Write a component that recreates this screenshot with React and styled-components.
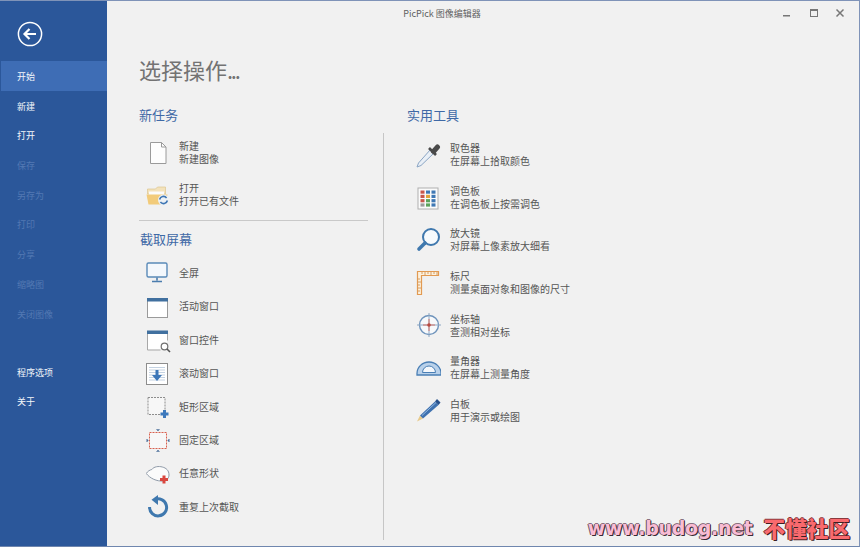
import React from 'react';
import styled, { createGlobalStyle } from 'styled-components';

const GlobalStyle = createGlobalStyle`
  html, body {
    margin: 0;
    padding: 0;
    background: #f1f1f1;
  }
  body {
    font-family: "Noto Sans CJK SC", "Liberation Sans", sans-serif;
    overflow: hidden;
  }
`;

const Window = styled.div`
  position: relative;
  display: flex;
  width: 860px;
  height: 547px;
  box-sizing: border-box;
  overflow: hidden;
  background: #f1f1f1;
  border-top: 1px solid #7f93b8;
  border-right: 1px solid #7f93b8;
  border-bottom: 1px solid #6f86ae;
`;

const Sidebar = styled.nav`
  width: 107px;
  flex-shrink: 0;
  background: #2b579a;
  display: flex;
  flex-direction: column;
`;

const BackButton = styled.div`
  height: 60px;
  padding-left: 17px;
  display: flex;
  align-items: center;
  padding-top: 6px;
  box-sizing: border-box;
`;

const NavList = styled.div`
  display: flex;
  flex-direction: column;
  margin-bottom: ${(props) => props.$gap || 0}px;
`;

const NavItem = styled.div`
  height: 29.7px;
  line-height: 31px;
  padding-left: 17px;
  font-size: 9px;
  color: ${(props) => (props.$disabled ? '#5379b3' : '#f4f7fb')};
  background: ${(props) => (props.$active ? '#3e6db5' : 'transparent')};
  margin-left: ${(props) => (props.$active ? '1px' : '0')};
  text-indent: ${(props) => (props.$active ? '-1px' : '0')};
`;

const Main = styled.main`
  flex: 1;
  display: flex;
  flex-direction: column;
  min-width: 0;
`;

const TitleBar = styled.header`
  height: 26px;
  box-sizing: border-box;
  padding: 0 82px 2px 0;
  display: flex;
  align-items: center;
  justify-content: center;
  position: relative;
  font-size: 9px;
  color: #5f5f5f;
`;

const WinButtons = styled.div`
  position: absolute;
  right: 14px;
  top: 6px;
  display: flex;
  gap: 16.5px;
`;

const Content = styled.div`
  flex: 1;
  display: flex;
  flex-direction: column;
  padding-left: 32px;
`;

const Heading = styled.h1`
  margin: 23.5px 0 18.5px;
  font-size: 22px;
  line-height: 36px;
  height: 36px;
  font-weight: 400;
  color: #737373;
`;

const Dots = styled.span`
  letter-spacing: -2.3px;
`;

const Columns = styled.div`
  display: flex;
  align-items: stretch;
`;

const LeftColumn = styled.section`
  width: 229px;
  flex-shrink: 0;
`;

const RightColumn = styled.section`
  border-left: 1px solid #c6c6c6;
  margin-left: 15px;
  height: 407px;
  margin-top: 28px;
  padding-left: 23px;
`;

const RightHeadingOffset = styled.div`
  margin-top: -28px;
`;

const SectionTitle = styled.h2`
  margin: ${(props) => props.$top || 0}px 0 ${(props) => props.$bottom || 0}px;
  font-size: 13px;
  line-height: 20px;
  font-weight: 400;
  color: #3f69a6;
  padding-left: ${(props) => props.$indent || 0}px;
`;

const Divider = styled.hr`
  border: 0;
  border-top: 1px solid #c9c9c9;
  margin: 5.5px 0 0;
`;

const TaskRow = styled.div`
  display: flex;
  align-items: center;
  height: ${(props) => props.$height}px;
  padding-left: ${(props) => props.$indent}px;
`;

const IconSlot = styled.div`
  width: ${(props) => props.$width}px;
  flex-shrink: 0;
  display: flex;
  align-items: center;
`;

const RowText = styled.div`
  display: flex;
  flex-direction: column;
  font-size: 10px;
  line-height: 13px;
  color: #555;
`;

const Watermark = styled.div`
  position: absolute;
  right: 9px;
  bottom: 7px;
  display: flex;
  align-items: center;
  gap: 11px;
  font-family: "DejaVu Sans", sans-serif;
  font-weight: 700;
  white-space: nowrap;
`;

const MarkLatin = styled.span`
  font-size: 19px;
  line-height: 22px;
  letter-spacing: -0.3px;
  color: #f9bcd4;
  text-shadow: 1px 1px 0 #3a2a34, -1px 0 0 #6f5663, 0 -1px 0 #8a7280, 1px 0 0 #6f5663;
`;

const MarkCjk = styled.span`
  font-family: "Noto Sans CJK SC", sans-serif;
  font-weight: 900;
  font-size: 21.6px;
  line-height: 22px;
  color: #f96a6e;
  text-shadow: 1px 1px 0 #3f1f22, -1px 0 0 #7a3034, 0 -1px 0 #8a3a3e, 1px 0 0 #7a3034;
`;

const BackIcon = () => (
  <svg width="26" height="26" viewBox="0 0 26 26" fill="none">
    <circle cx="13" cy="13" r="11.6" stroke="#fff" strokeWidth="1.5" />
    <path d="M7 13h12M12.5 8l-5 5 5 5" stroke="#fff" strokeWidth="2.2" />
  </svg>
);

const MinIcon = () => (
  <svg width="10" height="12" viewBox="0 0 10 12">
    <rect x="1" y="8" width="7" height="1.5" fill="#777" />
  </svg>
);

const MaxIcon = () => (
  <svg width="10" height="12" viewBox="0 0 10 12" fill="none">
    <rect x="1.5" y="2.5" width="7" height="7" stroke="#777" />
    <rect x="1" y="2" width="8" height="2" fill="#777" />
  </svg>
);

const CloseIcon = () => (
  <svg width="10" height="12" viewBox="0 0 10 12" fill="none">
    <path d="M1.5 2.5l7 7M8.5 2.5l-7 7" stroke="#777" strokeWidth="1.5" />
  </svg>
);

// dx, dy nudge the drawing inside its 28px box
const Svg = ({ dx = 0, dy = 0, children }) => (
  <svg width="28" height="28" viewBox={`${-dx} ${-dy} 28 28`} fill="none">
    {children}
  </svg>
);

const NewIcon = () => (
  <Svg>
    <path d="M4.5 4.5h11l4.500 4.500v16.500H4.500z" fill="#fdfdfd" stroke="#9a9a9a" />
    <path d="M15.500 4.500v4.500h4.500" stroke="#9a9a9a" />
  </Svg>
);

const OpenIcon = () => (
  <Svg dy={2}>
    <path d="M1.500 7h8l2-2h8v7h-18z" fill="#f3e2bb" stroke="#dcc68f" strokeWidth="0.7" />
    <path d="M3 9.500h15v5H3z" fill="#fbfbfb" />
    <path d="M0.500 12.500h21l-2 10H2.500z" fill="#f2cb7a" />
    <circle cx="17.500" cy="18" r="5.500" fill="#edf1f5" />
    <path d="M13.600 17.500a4 4 0 0 1 7-1.600M21.400 18.500a4 4 0 0 1-7 1.600" stroke="#3f76b3" strokeWidth="1.600" />
  </Svg>
);

const ScreenIcon = () => (
  <Svg dx={-1} dy={1.5}>
    <rect x="2" y="3.500" width="20" height="14" rx="1.500" fill="#f4f8fc" stroke="#5a8ab8" strokeWidth="1.400" />
    <path d="M12 18v3M7 22h10" stroke="#4b7dae" strokeWidth="1.600" />
  </Svg>
);

const ActiveWindowIcon = () => (
  <Svg dx={-1} dy={3}>
    <rect x="2.500" y="3.500" width="20" height="19" fill="#fff" stroke="#9a9a9a" />
    <rect x="2" y="3" width="21" height="3.500" fill="#41709f" />
  </Svg>
);

const ControlIcon = () => (
  <Svg dx={-1} dy={2.500}>
    <path d="M3 5h19v17H3z" fill="#fff" />
    <path d="M2.500 4v18.500h13M22.500 4v9" stroke="#a8a8a8" />
    <rect x="2" y="3" width="21" height="3.500" fill="#41709f" />
    <circle cx="19.500" cy="19" r="3.300" fill="#fff" stroke="#707070" strokeWidth="1.200" />
    <path d="M22 21.500l3 3" stroke="#555" strokeWidth="1.600" />
  </Svg>
);

const ScrollIcon = () => (
  <Svg dx={-2} dy={1}>
    <rect x="2.500" y="3.500" width="21" height="21" fill="#fff" stroke="#8d8d8d" />
    <path d="M5 7.500h16M5 10h16M5 12.500h16M5 15h16M5 17.500h16M5 20h16" stroke="#c4d2e2" />
    <path d="M11.500 10h3v5h3.500l-5 6-5-6h3.500z" fill="#3c76b8" />
  </Svg>
);

const RectIcon = () => (
  <Svg dx={-1.500} dy={2}>
    <rect x="3.500" y="3.500" width="17" height="17" fill="#f7f7f7" stroke="#8d8d8d" strokeDasharray="2 1" />
    <path d="M20 16v8M16 20h8" stroke="#3c78bc" strokeWidth="3" />
  </Svg>
);

const FixedIcon = () => (
  <Svg>
    <path d="M3.500 7.500h17v16h-17z" fill="#f7f7f7" stroke="#d9604f" strokeDasharray="2 1" />
    <path d="M10.500 4.500h3l-1.500 1.500zM10.500 26.500h3l-1.500-1.500zM0.800 14v3l1.500-1.500zM23.200 14v3l-1.500-1.500z" fill="#4a6f9a" stroke="#4a6f9a" strokeWidth="0.500" />
  </Svg>
);

const FreeIcon = () => (
  <Svg dx={-0.500} dy={1.500}>
    <path d="M0.800 13c1.500-2.500 3.500-3.500 5.500-4 2-3 7-3.500 10.500-2.500 4 1 6.700 3.500 6.700 8 0 3-2 5.500-6 6-6 .5-13-2.500-16.700-7.500z" fill="#fbfbfb" stroke="#8f9aa8" />
    <path d="M18.500 15v8M14.500 19h8" stroke="#d9473f" strokeWidth="3" />
  </Svg>
);

const RepeatIcon = () => (
  <Svg>
    <path d="M8.500 7.700A8.500 8.500 0 1 1 3.600 15" stroke="#3f78ae" strokeWidth="3" />
    <path d="M12 3v10L5.500 7.800z" fill="#3f78ae" />
  </Svg>
);

const PickerIcon = () => (
  <Svg>
    <path d="M17.500 9.500L5.500 23l-1.500 4 4-1.500L21 13z" fill="#e9eff6" stroke="#8aa5c4" />
    <path d="M16 8l7 7" stroke="#4a4a4a" strokeWidth="2.600" />
    <path d="M20.500 11.500l4-4.500" stroke="#4a4a4a" strokeWidth="5" strokeLinecap="round" />
  </Svg>
);

const PALETTE = [
  '#c9574a', '#3f78b4', '#3f78b4',
  '#c9574a', '#e0a53b', '#3f78b4',
  '#c9574a', '#5ca35a', '#3f78b4',
  '#9c9c9c', '#5ca35a', '#3f78b4',
];

const PaletteIcon = () => (
  <Svg dx={1.500} dy={1.500}>
    <rect x="3.500" y="3.500" width="20" height="21" fill="#fbfbfb" stroke="#b0b0b0" />
    {PALETTE.map((color, i) => (
      <rect key={i} x={6 + (i % 3) * 5.5} y={6 + Math.floor(i / 3) * 4.3} width="4" height="3.2" fill={color} />
    ))}
  </Svg>
);

const LensIcon = () => (
  <Svg>
    <circle cx="18" cy="12" r="8" fill="#f6fafd" stroke="#3f78ae" strokeWidth="2" />
    <path d="M12 18L6 24" stroke="#3f78ae" strokeWidth="3.600" strokeLinecap="round" />
  </Svg>
);

const RulerIcon = () => (
  <Svg>
    <path d="M4.500 3.500h21v4h-17v19h-4z" fill="#fdf1dd" stroke="#e29a52" strokeWidth="1.200" />
    <path d="M9 4v2M12 4v3M15 4v2M18 4v3M21 4v2M24 4v3M5 11h2M5 14h3M5 17h2M5 20h3M5 23h2" stroke="#c98a4a" strokeWidth="0.800" />
  </Svg>
);

const AxisIcon = () => (
  <Svg dx={2}>
    <circle cx="14" cy="14" r="9.500" fill="#f7f9fb" stroke="#6e93bb" strokeWidth="1.400" />
    <path d="M14 2v24M2 14h24" stroke="#8fa8c4" />
    <path d="M14 8v12M8 14h12" stroke="#d5776d" />
    <circle cx="14" cy="14" r="1.800" fill="#b94a3f" />
  </Svg>
);

const ProtractorIcon = () => (
  <Svg dx={2}>
    <path d="M2 20.500a12 11.500 0 0 1 24 0v1.500H2z" fill="#b9d1ea" stroke="#4a7fb5" strokeWidth="1.300" />
    <path d="M7.500 19.500a6.500 6.500 0 0 1 13 0z" fill="#f4f7fb" stroke="#4a7fb5" />
  </Svg>
);

const PenIcon = () => (
  <Svg dx={2}>
    <path d="M2 25.500l3-6 3 3z" fill="#e7c98a" />
    <path d="M5 19.500L20 5.500l3.500 3.500L8 22.500z" fill="#3f72b0" />
    <path d="M20 5.500l2-2.500 3.500 3.500L23.500 9z" fill="#27508a" />
    <path d="M7 19.500L21 6.500" stroke="#9dc0e4" strokeWidth="0.900" />
  </Svg>
);

const NAV_TOP = [
  { label: '开始', active: true },
  { label: '新建' },
  { label: '打开' },
  { label: '保存', disabled: true },
  { label: '另存为', disabled: true },
  { label: '打印', disabled: true },
  { label: '分享', disabled: true },
  { label: '缩略图', disabled: true },
  { label: '关闭图像', disabled: true },
];

const NAV_BOTTOM = [{ label: '程序选项' }, { label: '关于' }];

const TASKS = [
  { icon: NewIcon, title: '新建', desc: '新建图像' },
  { icon: OpenIcon, title: '打开', desc: '打开已有文件' },
];

const CAPTURES = [
  { icon: ScreenIcon, title: '全屏' },
  { icon: ActiveWindowIcon, title: '活动窗口' },
  { icon: ControlIcon, title: '窗口控件' },
  { icon: ScrollIcon, title: '滚动窗口' },
  { icon: RectIcon, title: '矩形区域' },
  { icon: FixedIcon, title: '固定区域' },
  { icon: FreeIcon, title: '任意形状' },
  { icon: RepeatIcon, title: '重复上次截取' },
];

const TOOLS = [
  { icon: PickerIcon, title: '取色器', desc: '在屏幕上拾取颜色' },
  { icon: PaletteIcon, title: '调色板', desc: '在调色板上按需调色' },
  { icon: LensIcon, title: '放大镜', desc: '对屏幕上像素放大细看' },
  { icon: RulerIcon, title: '标尺', desc: '测量桌面对象和图像的尺寸' },
  { icon: AxisIcon, title: '坐标轴', desc: '查测相对坐标' },
  { icon: ProtractorIcon, title: '量角器', desc: '在屏幕上测量角度' },
  { icon: PenIcon, title: '白板', desc: '用于演示或绘图' },
];

const Row = ({ item, height, indent, iconWidth }) => {
  const Icon = item.icon;
  return (
    <TaskRow $height={height} $indent={indent}>
      <IconSlot $width={iconWidth}>
        <Icon />
      </IconSlot>
      <RowText>
        <span>{item.title}</span>
        {item.desc && <span>{item.desc}</span>}
      </RowText>
    </TaskRow>
  );
};

const App = () => (
  <Window>
    <GlobalStyle />
    <Sidebar>
      <BackButton>
        <BackIcon />
      </BackButton>
      <NavList $gap={28.5}>
        {NAV_TOP.map((item) => (
          <NavItem key={item.label} $active={item.active} $disabled={item.disabled}>
            {item.label}
          </NavItem>
        ))}
      </NavList>
      <NavList>
        {NAV_BOTTOM.map((item) => (
          <NavItem key={item.label}>{item.label}</NavItem>
        ))}
      </NavList>
    </Sidebar>
    <Main>
      <TitleBar>
        PicPick 图像编辑器
        <WinButtons>
          <MinIcon />
          <MaxIcon />
          <CloseIcon />
        </WinButtons>
      </TitleBar>
      <Content>
        <Heading>
          选择操作<Dots>...</Dots>
        </Heading>
        <Columns>
          <LeftColumn>
            <SectionTitle $bottom={5.5}>新任务</SectionTitle>
            {TASKS.map((item) => (
              <Row key={item.title} item={item} height={42} indent={7} iconWidth={33} />
            ))}
            <Divider />
            <SectionTitle $indent={1} $top={7.5} $bottom={7.3}>
              截取屏幕
            </SectionTitle>
            {CAPTURES.map((item) => (
              <Row key={item.title} item={item} height={33.4} indent={7} iconWidth={33} />
            ))}
          </LeftColumn>
          <RightColumn>
            <RightHeadingOffset>
              <SectionTitle $bottom={7.5}>实用工具</SectionTitle>
            </RightHeadingOffset>
            {TOOLS.map((item) => (
              <Row key={item.title} item={item} height={42.7} indent={6} iconWidth={37} />
            ))}
          </RightColumn>
        </Columns>
      </Content>
    </Main>
    <Watermark>
      <MarkLatin>www.budog.net</MarkLatin>
      <MarkCjk>不懂社区</MarkCjk>
    </Watermark>
  </Window>
);

export default App;
